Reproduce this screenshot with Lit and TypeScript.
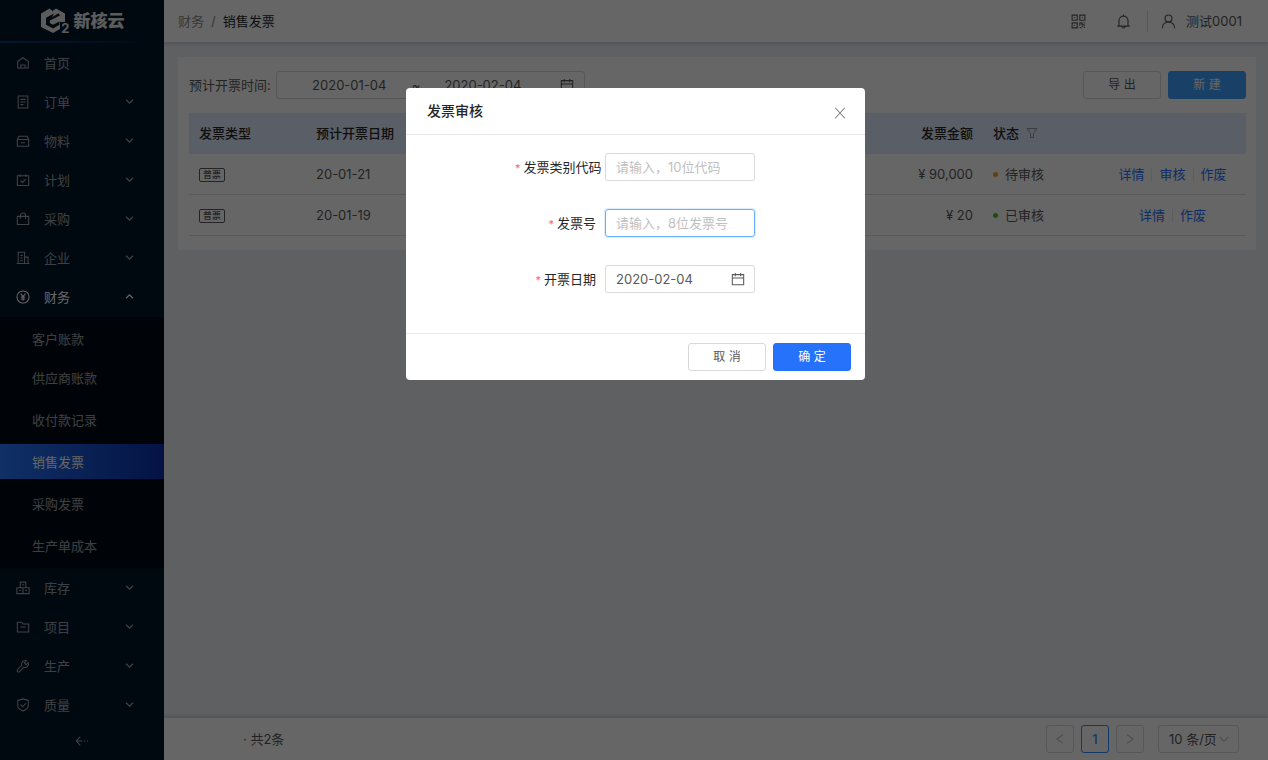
import { LitElement, html, css, svg, nothing } from "lit";
import { customElement } from "lit/decorators.js";
import { classMap } from "lit/directives/class-map.js";

const icons: Record<string, any> = {
  home: svg`<path d="M2 13.600V6L8 2l6 4v7.600z M5.500 13.500v-3.200h5v3.200"/>`,
  order: svg`<path d="M2.500 1.200h11v13.600h-11z M5 5h6M5 8h6M5 11h3.500"/>`,
  box: svg`<path d="M1.500 6.200h13v7.800h-13z M1.500 6.200l1.800-3.700h9.400l1.800 3.700 M5.800 9.900h4.400"/>`,
  plan: svg`<path d="M1.500 3.200h13v11h-13z M4.800 1.300v3.400M11.200 1.300v3.400 M5.200 8.600l2.200 2.200 3.700-3.800"/>`,
  bag: svg`<path d="M1.500 5h13v9.200h-13z M5 7.800V4.200a3 3 0 0 1 6 0v3.600"/>`,
  company: svg`<path d="M2.500 14.200V1.500h7.300v12.700M9.800 7h4v7M.8 14.300h14.600M5 5h2.600M5 8h2.600M5 11h2.600"/>`,
  money: svg`<circle cx="8" cy="8" r="6.900"/><path d="M5.300 4.200L8 7.600l2.700-3.400M8 7.600v4.800M5.400 7.900h5.200M5.400 10.200h5.200"/>`,
  stock: svg`<path d="M4.800 1.300h6.400v6.400H4.800zM1 7.700h7v6.700H1zM8 7.700h7v6.700H8zM7 4.300h2M3.500 10.900h2M10.500 10.900h2"/>`,
  folder: svg`<path d="M1.500 13.700V2.500h5l1.500 2h6.500v9.200z M5 8h6"/>`,
  wrench: svg`<path d="M14 4.100l-2.500 2.400-2-2L12 2A4.200 4.200 0 0 0 6.500 7.200L1.700 12a1.600 1.600 0 0 0 2.300 2.300l4.800-4.800A4.200 4.200 0 0 0 14 4.100z"/>`,
  shield: svg`<path d="M8 1l6 1.800v6.500c0 2.600-3.300 4.200-6 5.700-2.700-1.500-6-3.100-6-5.700V2.800z M5.100 7.700l2.300 2.300 3.800-3.800"/>`,
  down: svg`<path d="M3 5.500l5 5 5-5"/>`,
  up: svg`<path d="M3 10.500l5-5 5 5"/>`,
  left: svg`<path d="M11.500 3L4.500 8l7 5"/>`,
  right: svg`<path d="M4.500 3l7 5-7 5"/>`,
  close: svg`<path d="M2.500 2l11 12M13.500 2l-11 12"/>`,
  calendar: svg`<path d="M1.500 3h13v11.500h-13zM1.500 6.800h13M4.900 1v3.800M11.100 1v3.800"/>`,
  filter: svg`<path d="M1.500 2h13L10 8.500V14H6V8.500z"/>`,
  collapse: svg`<path d="M6 3L1.500 8 6 13M2 8h6.500M10.200 8h1.300M13.700 8H15"/>`,
  qr: svg`<path d="M1.200 1.200h5.400v5.400H1.200zM9.400 1.200h5.400v5.400H9.400zM1.200 9.400h5.400v5.400H1.200zM3.400 3.900h1M11.600 3.900h1M3.400 12.100h1M9.400 12.400V9.400h2.400v2.200h3M14.200 8.800v1.400M9 14.600h2.500M14.200 13.200v1.800M11.600 13.300h1"/>`,
  bell: svg`<path d="M8 .6v1.600M1.400 12.900h13.200M3.200 12.800V7a4.800 4.800 0 0 1 9.600 0v5.800M6.300 13.200a1.700 1.700 0 0 0 3.400 0"/>`,
  user: svg`<circle cx="8" cy="4.700" r="3.700"/><path d="M1.400 15.200c0-4 2.800-6.600 6.600-6.600s6.600 2.600 6.600 6.600"/>`,
};

const icon = (name: string, cls = "") =>
  html`<svg class="icon ${cls}" viewBox="0 0 16 16" aria-hidden="true">${icons[name]}</svg>`;

const base = css`
  * { box-sizing: border-box; }
  .icon {
    display: block;
    flex: none;
    width: 14px;
    height: 14px;
    fill: none;
    stroke: currentColor;
    stroke-width: 1.2;
  }
  a { text-decoration: none; color: inherit; }
  button, input, select { font: inherit; color: inherit; }
  .btn {
    width: 78px;
    height: 28px;
    padding: 0;
    border: 1px solid #d9d9d9;
    border-radius: 3px;
    background: #fff;
    color: #595959;
    font-size: 12px;
  }
`;

const menu = [
  { icon: "home", label: "首页", leaf: true },
  { icon: "order", label: "订单" },
  { icon: "box", label: "物料" },
  { icon: "plan", label: "计划" },
  { icon: "bag", label: "采购" },
  { icon: "company", label: "企业" },
  {
    icon: "money",
    label: "财务",
    children: ["客户账款", "供应商账款", "收付款记录", "销售发票", "采购发票", "生产单成本"],
  },
  { icon: "stock", label: "库存" },
  { icon: "folder", label: "项目" },
  { icon: "wrench", label: "生产" },
  { icon: "shield", label: "质量" },
] as { icon: string; label: string; leaf?: boolean; children?: string[] }[];

@customElement("side-nav")
class SideNav extends LitElement {
  static styles = [base, css`
    :host {
      display: flex;
      flex-direction: column;
      background: #001529;
      color: rgba(255, 255, 255, 0.62);
    }
    .logo {
      display: flex;
      align-items: center;
      justify-content: center;
      gap: 4px;
      height: 43px;
      border-bottom: 2px solid;
      border-image: linear-gradient(90deg, #0a3a80, #06264f 60%, #001529) 1;
      color: #e6e6e6;
      font-size: 17px;
      font-weight: 900;
    }
    .mark { position: relative; display: flex; width: 30px; }
    .mark svg { width: 26px; height: 27px; fill: currentColor; }
    .mark sub {
      position: absolute;
      right: 0;
      bottom: -1px;
      padding-left: 1px;
      background: #001529;
      font-size: 13px;
      font-weight: 700;
      line-height: 13px;
    }
    .item {
      display: flex;
      align-items: center;
      gap: 14px;
      height: 39px;
      padding: 0 29px 0 16px;
    }
    .item .label { flex: 1; }
    .item .arrow { width: 11px; height: 11px; stroke-width: 1.8; }
    .open { color: #fff; }
    .sub {
      display: flex;
      flex-direction: column;
      gap: 7px;
      margin-top: 1px;
      padding: 4px 0 5px;
      background: #000c17;
    }
    .sub a {
      display: flex;
      align-items: center;
      height: 35px;
      padding-left: 32px;
    }
    .sub a:first-child { margin-bottom: -3px; }
    .sub .active { color: #fff; background: linear-gradient(90deg, #2878ff, #0a30aa); }
    .fold {
      display: flex;
      justify-content: center;
      padding: 10px 0;
      border: 0;
      background: none;
    }
  `];

  render() {
    return html`
      <div class="logo">
        <span class="mark">
          <svg viewBox="0 0 26 27" aria-hidden="true">
            <path fill-rule="evenodd" d="M1 6.500L9.500 1.500 12.500 4 16 1.500 25 6.500V19L13 26 1 20z M14 6.500L6 10.800v7l7 3.600 6.500-3.600v-3.200l-6.500 3.200-3.200-1.800v-2.400L20 8.500l-1.500-2.300-6.500 4z"/>
          </svg>
          <sub>2</sub>
        </span>
        <span>新核云</span>
      </div>
      ${menu.map((m) => html`
        <a href="#" class="item ${classMap({ open: !!m.children })}">
          ${icon(m.icon)}<span class="label">${m.label}</span>
          ${m.leaf ? nothing : icon(m.children ? "up" : "down", "arrow")}
        </a>
        ${m.children
          ? html`<nav class="sub">${m.children.map((c) => html`
              <a href="#" class=${classMap({ active: c === "销售发票" })}>${c}</a>`)}</nav>`
          : nothing}
      `)}
      <button class="fold" aria-label="收起菜单">${icon("collapse")}</button>
    `;
  }
}

@customElement("top-bar")
class TopBar extends LitElement {
  static styles = [base, css`
    :host {
      display: flex;
      align-items: center;
      height: 42px;
      padding: 0 26px 0 14px;
      background: #fff;
      box-shadow: 0 1px 4px rgba(0, 12, 24, 0.2);
    }
    .crumbs { display: flex; gap: 7px; flex: 1; color: #8c8c8c; }
    .current { color: #262626; }
    .tools { display: flex; align-items: center; color: #595959; }
    .tools .icon { width: 15px; height: 15px; }
    .tool { padding: 0; border: 0; background: none; margin-right: 30px; }
    .bell { margin-right: 16px; }
    .user {
      display: flex;
      align-items: center;
      gap: 10px;
      height: 21px;
      padding-left: 13px;
      border-left: 1px solid #d9d9d9;
    }
  `];

  render() {
    return html`
      <nav class="crumbs"><a href="#">财务</a><span>/</span><span class="current">销售发票</span></nav>
      <div class="tools">
        <button class="tool" aria-label="二维码">${icon("qr")}</button>
        <button class="tool bell" aria-label="通知">${icon("bell")}</button>
        <a class="user" href="#">${icon("user")}<span>测试0001</span></a>
      </div>
    `;
  }
}

const rows = [
  { type: "普票", date: "20-01-21", amount: "¥ 90,000", status: "待审核", dot: "wait", actions: ["详情", "审核", "作废"] },
  { type: "普票", date: "20-01-19", amount: "¥ 20", status: "已审核", dot: "done", actions: ["详情", "作废"] },
];

@customElement("invoice-list")
class InvoiceList extends LitElement {
  static styles = [base, css`
    :host {
      display: block;
      margin: 15px 12px 0 14px;
      padding: 14px 10px 14px 11px;
      background: #fff;
      color: #595959;
    }
    .filter { display: flex; align-items: center; gap: 7px; margin-bottom: 14px; }
    .query { display: flex; align-items: center; gap: 5px; flex: 1; }
    .range {
      display: flex;
      align-items: center;
      width: 309px;
      height: 28px;
      padding: 0 10px;
      border: 1px solid #d9d9d9;
      border-radius: 3px;
    }
    .range input {
      width: 125px;
      min-width: 0;
      padding: 0;
      border: 0;
      background: none;
      text-align: center;
    }
    .range .icon { margin-left: auto; }
    .primary { background: #40a0ff; border-color: #40a0ff; color: #fff; }
    table { width: 100%; table-layout: fixed; border-collapse: separate; border-spacing: 0; }
    th, td {
      height: 41px;
      padding: 0 10px;
      border-bottom: 1px solid #e0e0e0;
      text-align: left;
      white-space: nowrap;
    }
    th { background: #e2ecfe; border-color: #e2ecfe; color: #262626; font-weight: 500; }
    .c-type { width: 117px; }
    .c-status { width: 116px; }
    .c-act { width: 147px; }
    .amount { text-align: right; }
    .tag {
      display: inline-block;
      padding: 0 3px;
      border: 1px solid #595959;
      border-radius: 2px;
      font-size: 9px;
      line-height: 12px;
      font-weight: 500;
      vertical-align: middle;
    }
    .state { display: flex; align-items: center; gap: 7px; }
    .state .icon { width: 12px; height: 12px; color: #8c8c8c; }
    .dot { width: 5px; height: 5px; border-radius: 50%; }
    .wait { background: #fa9f28; }
    .done { background: #52c41a; }
    .actions { display: flex; justify-content: center; color: #2672fa; }
    .actions a { padding: 0 7px; line-height: 13px; }
    .actions a + a { border-left: 1px solid #e8e8e8; }
  `];

  render() {
    return html`
      <div class="filter">
        <div class="query">
          <label for="from">预计开票时间:</label>
          <div class="range">
            <input id="from" value="2020-01-04"><span>~</span>
            <input aria-label="结束日期" value="2020-02-04">${icon("calendar")}
          </div>
        </div>
        <button class="btn">导 出</button>
        <button class="btn primary">新 建</button>
      </div>
      <table>
        <thead>
          <tr>
            <th class="c-type">发票类型</th>
            <th>预计开票日期</th>
            <th class="amount">发票金额</th>
            <th class="c-status"><div class="state">状态 ${icon("filter")}</div></th>
            <th class="c-act"></th>
          </tr>
        </thead>
        <tbody>
          ${rows.map((r) => html`
            <tr>
              <td><span class="tag">${r.type}</span></td>
              <td>${r.date}</td>
              <td class="amount">${r.amount}</td>
              <td><div class="state"><i class="dot ${r.dot}"></i>${r.status}</div></td>
              <td><div class="actions">${r.actions.map((a) => html`<a href="#">${a}</a>`)}</div></td>
            </tr>`)}
        </tbody>
      </table>
    `;
  }
}

@customElement("page-footer")
class PageFooter extends LitElement {
  static styles = [base, css`
    :host {
      display: flex;
      align-items: center;
      gap: 7px;
      height: 42px;
      padding: 0 29px 0 79px;
      background: #fff;
      box-shadow: 0 -1px 4px rgba(0, 12, 24, 0.2);
      color: #595959;
    }
    .total { flex: 1; }
    .page {
      display: grid;
      place-items: center;
      width: 28px;
      height: 28px;
      padding: 0;
      border: 1px solid #d9d9d9;
      border-radius: 3px;
      background: #fff;
      color: #bfbfbf;
    }
    .current { border-color: #2f8cff; color: #2f8cff; font-weight: 500; }
    .size {
      display: flex;
      align-items: center;
      width: 81px;
      height: 28px;
      margin-left: 7px;
      padding: 0 7px 0 10px;
      border: 1px solid #d9d9d9;
      border-radius: 3px;
    }
    .size select {
      flex: 1;
      width: 0;
      min-width: 0;
      padding: 0;
      border: 0;
      background: none;
      appearance: none;
    }
    .size .icon { color: #bfbfbf; }
  `];

  render() {
    return html`
      <span class="total">· 共2条</span>
      <button class="page" aria-label="上一页">${icon("left")}</button>
      <button class="page current">1</button>
      <button class="page" aria-label="下一页">${icon("right")}</button>
      <div class="size"><select aria-label="每页条数"><option>10 条/页</option></select>${icon("down")}</div>
    `;
  }
}

@customElement("audit-dialog")
class AuditDialog extends LitElement {
  static styles = [base, css`
    :host {
      display: flex;
      align-items: flex-start;
      justify-content: center;
      padding: 88px 0 0 3px;
      background: rgba(0, 0, 0, 0.6);
    }
    .dialog { width: 459px; background: #fff; border-radius: 4px; color: #262626; }
    .head {
      display: flex;
      align-items: center;
      justify-content: space-between;
      height: 47px;
      padding: 0 18px 0 21px;
      border-bottom: 1px solid #e8e8e8;
    }
    h2 { margin: 0; font-size: 14px; font-weight: 500; }
    .close { padding: 3px 0 0; border: 0; background: none; color: #7a7a7a; }
    form { display: grid; gap: 28px; padding: 18px 109px 40px; }
    .field { display: grid; grid-template-columns: 81px 150px; gap: 9px; align-items: center; }
    label { white-space: nowrap; text-align: right; }
    .star { color: #f5696c; font-size: 11px; margin-right: 3px; }
    .box {
      display: flex;
      align-items: center;
      height: 28px;
      padding: 0 9px 0 10px;
      border: 1px solid #d9d9d9;
      border-radius: 3px;
      color: #595959;
    }
    .box input { flex: 1; width: 0; min-width: 0; padding: 0; border: 0; outline: 0; background: none; }
    .box input::placeholder { color: #bfbfbf; }
    .focus { border-color: #69b1ff; box-shadow: 0 0 1px 1px rgba(64, 160, 255, 0.2); }
    .foot {
      display: flex;
      justify-content: flex-end;
      gap: 7px;
      padding: 9px 14px;
      border-top: 1px solid #e8e8e8;
    }
    .ok { background: #2672fa; border-color: #2672fa; color: #fff; }
  `];

  render() {
    return html`
      <section class="dialog" role="dialog" aria-label="发票审核">
        <header class="head">
          <h2>发票审核</h2>
          <button class="close" aria-label="关闭">${icon("close")}</button>
        </header>
        <form>
          <div class="field">
            <label for="code"><span class="star">*</span>发票类别代码</label>
            <div class="box"><input id="code" placeholder="请输入，10位代码"></div>
          </div>
          <div class="field">
            <label for="no"><span class="star">*</span>发票号</label>
            <div class="box focus"><input id="no" placeholder="请输入，8位发票号"></div>
          </div>
          <div class="field">
            <label for="date"><span class="star">*</span>开票日期</label>
            <div class="box"><input id="date" value="2020-02-04">${icon("calendar")}</div>
          </div>
        </form>
        <footer class="foot">
          <button class="btn">取 消</button>
          <button class="btn ok">确 定</button>
        </footer>
      </section>
    `;
  }
}

@customElement("app-root")
class AppRoot extends LitElement {
  static styles = css`
    :host {
      display: grid;
      grid-template-columns: 164px 1fr;
      min-height: 100vh;
      font: 13px/20px Inter, "Noto Sans CJK SC", sans-serif;
    }
    .main { display: flex; flex-direction: column; background: #eef0f5; }
    .grow { flex: 1; }
    .mask { position: absolute; inset: 0; }
  `;

  render() {
    return html`
      <side-nav></side-nav>
      <div class="main">
        <top-bar></top-bar>
        <invoice-list></invoice-list>
        <div class="grow"></div>
        <page-footer></page-footer>
      </div>
      <audit-dialog class="mask"></audit-dialog>
    `;
  }
}
